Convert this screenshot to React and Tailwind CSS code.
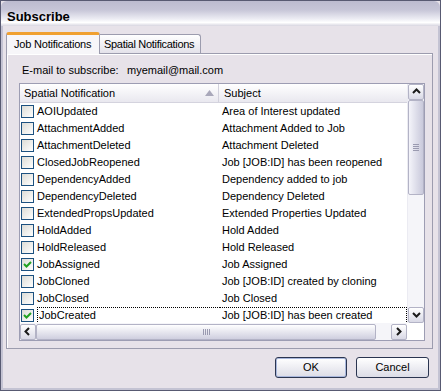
const rows = [
	["AOIUpdated", "Area of Interest updated", false],
	["AttachmentAdded", "Attachment Added to Job", false],
	["AttachmentDeleted", "Attachment Deleted", false],
	["ClosedJobReopened", "Job [JOB:ID] has been reopened", false],
	["DependencyAdded", "Dependency added to job", false],
	["DependencyDeleted", "Dependency Deleted", false],
	["ExtendedPropsUpdated", "Extended Properties Updated", false],
	["HoldAdded", "Hold Added", false],
	["HoldReleased", "Hold Released", false],
	["JobAssigned", "Job Assigned", true],
	["JobCloned", "Job [JOB:ID] created by cloning", false],
	["JobClosed", "Job Closed", false],
	["JobCreated", "Job [JOB:ID] has been created", true],
];

const Check = ({ checked }) => (
	<div className="w-[13px] h-[13px] shrink-0 border border-[#1c5180] bg-gradient-to-br from-[#dcdcd6] to-white flex items-center justify-center">
		{checked && (
			<svg width="9" height="9" viewBox="0 0 9 9">
				<path d="M1 4 L3.5 6.5 L8 2" fill="none" stroke="#21a121" strokeWidth="2" />
			</svg>
		)}
	</div>
);

const Chevron = ({ dir }) => {
	const d = {
		up: "M1 5 L4.5 1.5 L8 5",
		down: "M1 2 L4.5 5.5 L8 2",
		left: "M5 1 L1.5 4.5 L5 8",
		right: "M2 1 L5.5 4.5 L2 8",
	}[dir];
	return (
		<svg width="9" height="9" viewBox="0 0 9 9">
			<path d={d} fill="none" stroke="#1a1a1a" strokeWidth="2" />
		</svg>
	);
};

const ScrollBtn = ({ dir }) => (
	<div className="w-[16px] h-[16px] shrink-0 rounded-[2px] border border-[#b3b3c6] bg-gradient-to-b from-white to-[#d9d9e6] flex items-center justify-center">
		<Chevron dir={dir} />
	</div>
);

export default function App() {
	return (
		<div className="w-[441px] h-[391px] border border-[#585a72] bg-[#e7e2e9] flex flex-col font-['Liberation_Sans',Arial,sans-serif] text-[11px] text-black overflow-hidden">
			<div className="h-[25px] shrink-0 bg-[linear-gradient(to_bottom,#bcbbcf_0%,#c6c5d7_35%,#ededf4_72%,#ffffff_86%,#d7d5e0_100%)] flex items-center pl-[6px] pt-[5px] rounded-t-[6px]">
				<span className="font-bold text-[13px] leading-none">Subscribe</span>
			</div>
			<div className="flex-1 border-x-2 border-b-2 border-[#c4c3d3] flex flex-col pl-[3px] pr-[4px]">
				{/* tabs */}
				<div className="flex items-end mt-[5px] h-[22px] relative z-10">
					<div className="h-[22px] w-[94px] -mb-px border-x border-[#9c9cae] rounded-t-[3px] bg-[#f7f6f9] border-t-[3px] border-t-[#f0a030] flex items-center pl-[7px] whitespace-nowrap tracking-[-0.2px]">
						Job Notifications
					</div>
					<div className="h-[19px] w-[101px] border-t border-r border-[#9c9cae] rounded-tr-[3px] bg-gradient-to-b from-white to-[#e4e2ea] flex items-center pl-[4px] whitespace-nowrap tracking-[-0.3px]">
						Spatial Notifications
					</div>
				</div>
				{/* panel */}
				<div className="h-[296px] w-[427px] border border-[#9c9cae] shadow-[inset_1px_1px_0_white] flex flex-col pl-[12px]">
					<div className="h-[29px] flex items-center pl-[3px] pt-[4px]">
						<span className="w-[105px]">E-mail to subscribe:</span>
						<span>myemail@mail.com</span>
					</div>
					<div className="w-[406px] h-[258px] border border-[#9d9db3] bg-white flex">
						<div className="flex flex-col w-[387px]">
							<div className="h-[19px] shrink-0 flex bg-gradient-to-b from-white to-[#e9e8ef] border-b border-[#d4d3de]">
								<div className="w-[199px] flex items-center justify-between pl-[4px] pr-[4px] border-r border-[#d2d1dc]">
									<span>Spatial Notification</span>
									<svg width="9" height="6" viewBox="0 0 9 6">
										<path d="M0 6 L4.5 0 L9 6 Z" fill="#a9a8ba" />
									</svg>
								</div>
								<div className="flex items-center pl-[5px]">Subject</div>
							</div>
							<div className="h-[220px] overflow-hidden">
								{rows.map(([name, subject, checked], i) => (
									<div key={name} className="h-[17px] flex items-center">
										<div className="w-[200px] flex items-center pl-[1px] gap-[3px]">
											<Check checked={checked} />
											<span className={i === 12 ? "h-[17px] flex items-center flex-1 border-l border-y border-dotted border-black pl-[1px]" : ""}>{name}</span>
										</div>
										<div className={i === 12 ? "flex-1 h-[17px] flex items-center pl-[2px] border-r border-y border-dotted border-black" : "pl-[2px]"}>{subject}</div>
									</div>
								))}
							</div>
							<div className="h-[17px] shrink-0 flex items-center bg-[#f5f5f9]">
								<ScrollBtn dir="left" />
								<div className="w-[340px] h-[16px] rounded-[2px] border border-[#b3b3c6] bg-gradient-to-b from-white to-[#cfcfdf] flex items-center justify-center gap-[1px]">
									<div className="w-px h-[6px] bg-[#9a9ab0]" />
									<div className="w-px h-[6px] bg-[#9a9ab0]" />
									<div className="w-px h-[6px] bg-[#9a9ab0]" />
									<div className="w-px h-[6px] bg-[#9a9ab0]" />
								</div>
								<div className="flex-1" />
								<ScrollBtn dir="right" />
							</div>
						</div>
						<div className="w-[17px] flex flex-col">
							<div className="h-[239px] flex flex-col bg-[#f5f5f9] border-l border-[#ebebf2]">
								<ScrollBtn dir="up" />
								<div className="h-[95px] w-[16px] rounded-[2px] border border-[#b3b3c6] bg-gradient-to-r from-[#f4f4fa] to-[#c9c9db] flex flex-col items-center justify-center gap-[1px]">
									<div className="h-px w-[6px] bg-[#9a9ab0]" />
									<div className="h-px w-[6px] bg-[#9a9ab0]" />
									<div className="h-px w-[6px] bg-[#9a9ab0]" />
									<div className="h-px w-[6px] bg-[#9a9ab0]" />
								</div>
								<div className="flex-1" />
								<ScrollBtn dir="down" />
							</div>
							<div className="flex-1 bg-white" />
						</div>
					</div>
				</div>
				{/* buttons */}
				<div className="flex justify-end gap-[9px] mt-[8px] pr-[5px]">
					<button className="w-[72px] h-[21px] rounded-[3px] border border-[#2b3550] bg-gradient-to-b from-white to-[#dcdce6] shadow-[inset_0_0_0_1px_#a9b7dc] flex items-center justify-center">
						OK
					</button>
					<button className="w-[73px] h-[21px] rounded-[3px] border border-[#2b3550] bg-gradient-to-b from-white to-[#dcdce6] flex items-center justify-center">
						Cancel
					</button>
				</div>
			</div>
		</div>
	);
}
